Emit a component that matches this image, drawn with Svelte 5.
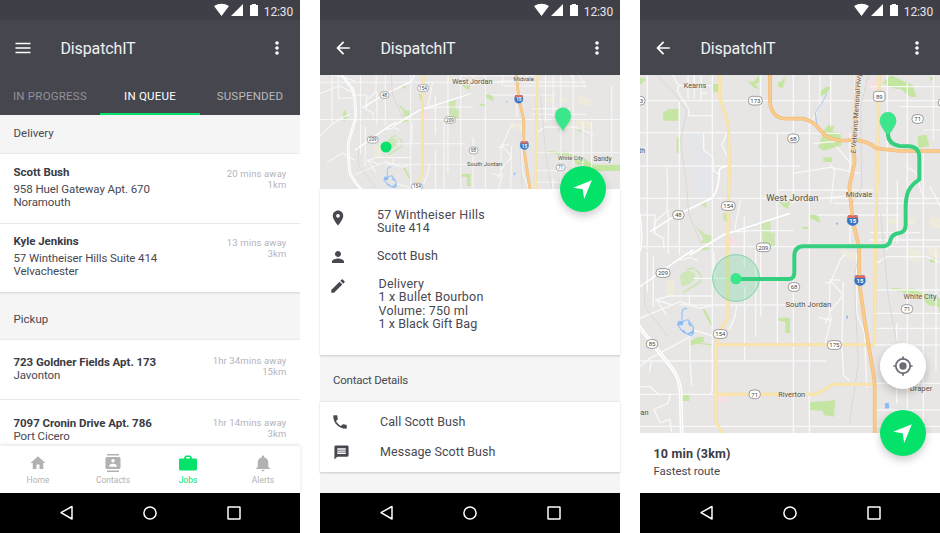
<script>
  const groups = [
    {
      title: 'Delivery',
      jobs: [
        { name: 'Scott Bush', address: ['958 Huel Gateway Apt. 670', 'Noramouth'], eta: '20 mins away', distance: '1km' },
        { name: 'Kyle Jenkins', address: ['57 Wintheiser Hills Suite 414', 'Velvachester'], eta: '13 mins away', distance: '3km' }
      ]
    },
    {
      title: 'Pickup',
      jobs: [
        { name: '723 Goldner Fields Apt. 173', address: ['Javonton'], eta: '1hr 34mins away', distance: '15km' },
        { name: '7097 Cronin Drive Apt. 786', address: ['Port Cicero'], eta: '1hr 14mins away', distance: '3km' }
      ]
    }
  ];

  const tabs = [
    { label: 'Home', d: 'M10 20v-6h4v6h5v-8h3L12 3 2 12h3v8z' },
    { label: 'Contacts', d: 'M20 0H4v2h16V0zM4 24h16v-2H4v2zM20 4H4c-1.1 0-2 .9-2 2v12c0 1.100.9 2 2 2h16c1.100 0 2-.9 2-2V6c0-1.100-.9-2-2-2zm-8 2.750c1.240 0 2.250 1.010 2.250 2.250s-1.010 2.250-2.250 2.250S9.750 10.240 9.750 9 10.760 6.750 12 6.750zM17 17H7v-1.500c0-1.670 3.330-2.500 5-2.500s5 .83 5 2.500V17z' },
    { label: 'Jobs', active: true, d: 'M22 6h-5V4l-2-2H9L7 4v2H2C.9 6 0 6.900 0 8v12c0 1.100.9 2 2 2h20c1.100 0 2-.9 2-2V8c0-1.100-.9-2-2-2zM9.500 4h5v2h-5z' },
    { label: 'Alerts', d: 'M12 23c1.100 0 2-.9 2-2h-4c0 1.100.9 2 2 2zm7-6v-6c0-3.350-2.360-6.150-5.500-6.830V3.500c0-.83-.67-1.500-1.500-1.500s-1.500.67-1.500 1.500v.67C7.360 4.850 5 7.650 5 11v6l-2 2v1h18v-1l-2-2z' }
  ];

  const places = [
    [165, 53, 'Kearns', 22],
    [457, 394, 'West Jordan', 28],
    [657, 382, 'Midvale', 23],
    [505, 711, 'South Jordan', 23],
    [840, 687, 'White City', 22],
    [965, 693, 'Sandy', 26],
    [455, 980, 'Riverton', 22],
    [843, 964, 'Draper', 23],
    [-20, 1034, 'Herriman', 22],
    [-12, 248, 'South', 21]
  ];

  const routes = [
    [346, 92, '173'], [-6, 92, '173'], [265, 408, '154'], [115, 435, '48'], [370, 532, '209'],
    [69, 609, '209'], [462, 651, '68'], [241, 792, '154'], [36, 822, '85'], [344, 973, '71'],
    [583, 825, '175'], [801, 717, '71'], [833, 147, '71'], [460, 205, '68']
  ];

  const wide = { left: -130, right: 1030, top: 357, bottom: 801 };
  const full = { left: -30, right: 900, top: 15, bottom: 1089 };
  const inside = (view) => ([x, y]) => x > view.left && x < view.right && y > view.top && y < view.bottom;
</script>

{#snippet statusBar()}
  <div class="status">
    <svg width="44" height="14" viewBox="0 0 44 14">
      <path d="M0 3Q7.500-1.400 15 3L7.500 13z M17 13L29 1v12z M36 2h2V1h4v1h2v11h-8z" fill="#fff" />
    </svg>
    <span>12:30</span>
  </div>
{/snippet}

{#snippet toolbar(back)}
  <div class="toolbar">
    {#if back}
      <svg class="lead" width="20" height="20" viewBox="0 0 24 24"><path d="M20 11H7.830l5.590-5.590L12 4l-8 8 8 8 1.410-1.410L7.830 13H20z" fill="#fff" /></svg>
    {:else}
      <svg class="lead" width="20" height="20" viewBox="0 0 20 20"><path d="M2.500 5.500h15M2.500 10h15M2.500 14.500h15" stroke="#fff" stroke-width="1.600" /></svg>
    {/if}
    <h1>DispatchIT</h1>
    <svg width="6" height="16" viewBox="0 0 6 16" fill="#fff"><circle cx="3" cy="3" r="1.800" /><circle cx="3" cy="8" r="1.800" /><circle cx="3" cy="13" r="1.800" /></svg>
  </div>
{/snippet}

{#snippet systemNav()}
  <div class="sysnav">
    <svg width="300" height="40" viewBox="0 0 300 40" fill="none" stroke="#fff" stroke-width="1.500">
      <path d="M61 19.700L72 13.500V26z" stroke-linejoin="round" />
      <circle cx="150" cy="20" r="6.100" />
      <rect x="228" y="14" width="12" height="12" rx=".6" />
    </svg>
  </div>
{/snippet}

{#snippet navigateIcon()}
  <svg class="arrow" width="25" height="25" viewBox="0 0 24 24"><path d="M21 3L3 10.200l9.200 1.600L13.600 21z" fill="#fff" /></svg>
{/snippet}

{#snippet shield(x, y)}
  <g transform="translate({x} {y})">
    <path d="M-14-15Q-7-18 0-14Q7-18 14-15Q22 4 13 12Q8 16 0 18Q-8 16-13 12Q-22 4-14-15z" fill="#3973bd" stroke="#e8eef7" stroke-width="1.500" />
    <path d="M-14-15Q-7-18 0-14Q7-18 14-15L16-7H-16z" fill="#db6b5c" />
    <text y="9" font-size="18" font-weight="700" fill="#fff" text-anchor="middle">15</text>
  </g>
{/snippet}

{#snippet cityMap(view)}
  <rect x="-140" y="0" width="1200" height="1100" fill="#e8e6e5" />
  <g fill="#c5e5a2">
    <path d="M216 42h22v25h-22zM69 130l15-12 32-2v36H69zM110 205l8-6v50h-8zM322 32l18 4 16-18 2 18-12 8 14 16-20-8zM414 38l12-4 8-14v14l-6 20-14-4zM0 24l18 2-14 16H0z" />
    <path d="M535 232l16-50 16-20 16 8-6 14 24 6 4 36-54 16zM550 262h26v14h-26zM834 198l26-4 8 34-34 6zM728 38l25-22 65 30 12 36-20-2-26-22-30-4zM870 18l14 8-12 8z" />
    <path d="M511 434l24 2 6 24-18-10-12-4zM486 470h20v6h-20zM415 394l20 6 14-8-4 24-14-6zM540 65l20-16 12 4-14 18-18 8z" />
    <path d="M362 462l30-10v36h12v40l-34 2-4-36zM180 400l18-6 2 18-16-4zM248 430h16v28l-14-8zM168 470l16 12 10 10 20 4v22h-34l10-12zM184 532l28-6-4 12-24 4z" opacity=".8" />
    <path d="M186 717l10 2 20 40-3 8zM415 743h35v46h-14v-34l-21-3zM148 815l28-15 16 2v14l-18 2 46 5v4l-48-6-22 6zM126 975h22v18h-22zM510 996l62-4 14-4-4 52-30-4-4-14-40-2z" />
    <path d="M754 653l42 4 24-2 20 12 48 10 40 30h110v24H898v-20l-34-6-20-26-36-4-20-8-34-6zM870 565h18v12h-18zM-40 490l12 30-16 20-4-30z" />
    <path d="M120 622q5-20 25-20 30 6 18 26-18 22-38 20z" opacity=".7" />
  </g>
  <path d="M165 600q24 10 16 36-20 12-40 24l-12 8M140 598l22-4" fill="none" stroke="#cce6b5" stroke-width="6" />
  <path d="M678 45l24-26 12 34-10 14zM268 505l20-5 4 26-22 5zM232 978h34v18h-34z" fill="#f4e1e4" />
  <g fill="#eeebdc">
    <path d="M76 632h28v44H76zM740 445h38v16h-38zM795 443h32v18h-32zM800 535l46 5-4 36-42-8zM602 540l60 12-8 20-44-10zM862 530l60 10v30l-60-14zM870 440l50 10v28l-50-8z" />
  </g>
  <path d="M147 190h44v58l26 12-4 110-50 30z" fill="#e4e6e9" />

  <g fill="none" stroke="#f8f8f8" stroke-width="4">
    <path d="M22 15V540M118 90V555M217 15V386M217 386V960L212 972M362 15V740M412 190V822M313 440V590M314 650V870M460 600V1090M508 15V1090M460 15V400M347 540V800" />
    <path d="M-140 92H900M-140 188H300L600 190M-140 288H480M-140 385H900M-140 530H1060M118 705H520M-140 873H560M-140 973H220M-140 1069H1060M313 482H460M412 360H700M265 485H320M160 625H430" />
    <path d="M802 40V1090M850 250V1090M888 540V900M772 330V520M770 760V1000M922 540V1000M1000 400V700M572 15V170M742 15V540M630 190V520" />
    <path d="M580 400H900M530 435H780M520 220L640 210M710 580L740 560H860L930 590M706 660H1060M700 730H900M700 775H900M700 825H900M700 940H900M700 1020H900M460 310L570 292 660 310M450 394L620 378M690 488H840M690 510H900" />
    <path d="M98 15l18 32H214M116 47l-4 16 34 54v20M144 15v70M163 15v70M183 15v75M202 70l-15 0M146 137h70M191 190v50l28 22 2 42 20 10M260 190l-14 35 16 35M81 290l2 60-2 75-38 30v35l28 15v28M-140 340l140 40M0 435h45v60" />
    <path d="M0 745L96 705l24-10 60 20 40-10M96 705L50 690l30 45M46 690l40-12h130M0 890l30-25 120-65 10-20 60 18M22 545v120M148 680v28M150 805v65l5 80M34 873l-6 35M0 950l30 0 30 26M90 975l-6 25-42 18 18 40 30-10 6 45" />
    <path d="M290 705l-4 30-18 45M302 388l-18 90M118 570l34-8 20 10M222 545v80M570 750l-34-8M570 642L600 570l16-18M555 820l20-80M555 640l14-4v100l-14 24M610 635l-4 190 4 90 18 18M570 725l40-50-40-45h30M650 550v180l24 60 6 165M-140 545V660M-140 430L-60 400 0 430M-110 700L-50 660 0 690" />
    <path d="M840 300q-10 60 20 90M850 180h60M840 330l-14-24-28-16M870 350l32 60M572 400l12-100-12-16M880 210V15M645 15V170M540 15v90l-30 60M690 50h210M780 110h120M590 230l50 60" stroke-width="3.500" />
    <path d="M-140 600Q-80 530-20 510M-90 357v190M-65 357v90h60M40 560v150M85 420v130" stroke-width="4" />
  </g>
  <g fill="none" stroke="#fff" stroke-width="5">
    <path d="M30 485L110 435 215 385Q238 360 238 300 242 290 265 288M150 555L250 495 450 430M0 650L120 565 160 540" />
    <path d="M-52 357L-8 415Q6 470 0 532L-26 620Q-28 660-20 740L0 773 100 900Q120 930 122 970L125 1090" stroke-width="11" />
  </g>
  <path d="M-52 357L-8 415Q6 470 0 532L-26 620Q-28 660-20 740L0 773 100 900Q120 930 122 970L125 1090" fill="none" stroke="#e4e2e0" stroke-width="2" />
  <g fill="none" stroke="#d7d5d2" stroke-width="2.500">
    <path d="M50 15L95 60 140 120 122 215 140 350 146 430 185 525" />
    <path d="M685 15L662 110 665 350 630 410 660 540 642 620 655 880 628 1060M722 430Q735 580 745 680L770 820M14 640v70l70 90" />
  </g>
  <path d="M560 72l-10 20-24 36 6 50 20 12" fill="none" stroke="#a8c8f0" stroke-width="3" />
  <path d="M126 750v-25q8-14 15-8" fill="none" stroke="#9cc6f8" stroke-width="4" />
  <path d="M128 753l-14 12 12 18 26 14 8-6v-20l-16-22z" fill="none" stroke="#9cc6f8" stroke-width="4" />
  <path d="M116 752l14 2-2 12-18 0zM122 776l14 8-2 8zM136 792h24v-16l-8 10zM144 752l14 20-12-6z" fill="#8abdf8" />
  <path d="M734 1000l12-2 2 16-12 2zM619 738l5-2v10h-5zM586 462l8-6v8z" fill="#8abdf8" />

  <g fill="none" stroke-linejoin="round">
    <g stroke="#f1dba0" stroke-width="9">
      <path d="M240 15L238 80 265 160 268 300 265 410 263 560 264 740 232 800 228 830V1055L250 1095" />
      <path d="M718 15L714 230 706 540 704 822M228 824H704M228 973H530L580 943H708" />
    </g>
    <g stroke="#fbe6ac" stroke-width="6.500">
      <path d="M240 15L238 80 265 160 268 300 265 410 263 560 264 740 232 800 228 830V1055L250 1095" />
      <path d="M718 15L714 230 706 540 704 822M228 824H704M228 973H530L580 943H708" />
    </g>
    <g stroke="#ecb877" stroke-width="11">
      <path d="M390 15V92Q392 150 450 146H490Q520 152 545 185T630 210Q675 208 710 235L780 243H1060" />
      <path d="M653 15L648 110 640 230Q645 265 643 280L628 350 638 450 657 530 658 640 675 760 700 910 704 940V1090" />
    </g>
    <g stroke="#fbcb8c" stroke-width="7.500">
      <path d="M390 15V92Q392 150 450 146H490Q520 152 545 185T630 210Q675 208 710 235L780 243H1060" />
      <path d="M653 15L648 110 640 230Q645 265 643 280L628 350 638 450 657 530 658 640 675 760 700 910 704 940V1090" />
    </g>
  </g>

  <g font-family="Roboto, sans-serif">
    {#each routes.filter(inside(view)) as [x, y, label]}
      <rect x={x - (label.length === 3 ? 21 : 17)} y={y - 13} width={label.length === 3 ? 42 : 34} height="26" rx="12" fill="#fff" stroke="#7a7a7a" stroke-width="2.200" />
      <text {x} y={y + 6.5} font-size="18" fill="#444" text-anchor="middle">{label}</text>
    {/each}
    {#if view === full}
      <rect x="701" y="64" width="34" height="30" rx="7" fill="#fff" stroke="#7a7a7a" stroke-width="2.200" />
      <text x="718" y="86" font-size="18" fill="#444" text-anchor="middle">89</text>
      <rect x="895" y="85" width="42" height="26" rx="12" fill="#fff" stroke="#7a7a7a" stroke-width="2.200" />
      <text transform="translate(647 250) rotate(-86)" font-size="21" fill="#5b4c3c" stroke="#f6efe4" stroke-width="3" paint-order="stroke">E Veterans Memorial Hwy</text>
    {/if}
    {@render shield(638, 451)}
    {@render shield(660, 631)}
    {#each places.filter(inside(view)) as [x, y, label, size]}
      <text {x} {y} font-size={size} fill="#5a5040" stroke="#efedea" stroke-width="3" paint-order="stroke" text-anchor="middle">{label}</text>
    {/each}
  </g>
{/snippet}

<main>
  <section class="phone">
    {@render statusBar()}
    {@render toolbar(false)}
    <nav class="tabs">
      <span class="dim">IN PROGRESS</span>
      <span class="on">IN QUEUE</span>
      <span>SUSPENDED</span>
    </nav>
    <div class="list">
      {#each groups as group}
        <h2>{group.title}</h2>
        <div class="card" class:compact={group.title === 'Pickup'}>
          {#each group.jobs as job}
            <article>
              <div>
                <strong>{job.name}</strong>
                {#each job.address as line}<p>{line}</p>{/each}
              </div>
              <div class="eta">{job.eta}<br />{job.distance}</div>
            </article>
          {/each}
        </div>
      {/each}
    </div>
    <nav class="bottom">
      {#each tabs as tab}
        <div class:active={tab.active}>
          <svg width="18" height="18" viewBox="0 0 24 24"><path d={tab.d} fill="currentColor" fill-rule="evenodd" /></svg>
          <span>{tab.label}</span>
        </div>
      {/each}
    </nav>
    {@render systemNav()}
  </section>

  <section class="phone">
    {@render statusBar()}
    {@render toolbar(true)}
    <div class="map short">
      <svg width="300" height="114" viewBox="0 0 300 114">
        <svg width="300" height="114" viewBox="-136.400 357 1168.800 444" preserveAspectRatio="none">{@render cityMap(wide)}</svg>
        <circle cx="66" cy="72" r="5.500" fill="#05e269" />
        <path d="M243 56C238 48.500 235 45 235 40.500a8 8 0 0 1 16 0C251 45 248 48.500 243 56z" fill="#3ce68a" class="pin" />
      </svg>
      <button class="fab" aria-label="Navigate">{@render navigateIcon()}</button>
    </div>
    <div class="details">
      <div class="row place">
        <svg width="18" height="18" viewBox="0 0 24 24"><path d="M12 2C8.130 2 5 5.130 5 9c0 5.250 7 13 7 13s7-7.750 7-13c0-3.870-3.130-7-7-7zm0 9.500a2.500 2.500 0 1 1 0-5 2.500 2.500 0 0 1 0 5z" /></svg>
        <p>57 Wintheiser Hills<br /><span class="tight">Suite 414</span></p>
      </div>
      <div class="row person">
        <svg width="18" height="18" viewBox="0 0 24 24"><path d="M12 12c2.210 0 4-1.790 4-4s-1.790-4-4-4-4 1.790-4 4 1.790 4 4 4zm0 2c-2.670 0-8 1.340-8 4v2h16v-2c0-2.660-5.330-4-8-4z" /></svg>
        <p class="tight">Scott Bush</p>
      </div>
      <div class="row order">
        <svg width="18" height="18" viewBox="0 0 24 24"><path d="M3 17.250V21h3.750L17.810 9.940l-3.750-3.750L3 17.250zM20.710 7.040a1 1 0 0 0 0-1.410l-2.340-2.340a1 1 0 0 0-1.410 0l-1.830 1.830 3.750 3.750 1.830-1.830z" /></svg>
        <p>Delivery<br />1 x Bullet Bourbon<br />Volume: 750 ml<br /><span class="tight">1 x Black Gift Bag</span></p>
      </div>
    </div>
    <h2 class="contact">Contact Details</h2>
    <div class="actions">
      <div>
        <svg width="18" height="18" viewBox="0 0 24 24"><path d="M6.620 10.790c1.440 2.830 3.760 5.140 6.590 6.590l2.200-2.200c.27-.27.67-.36 1.020-.24 1.120.37 2.330.57 3.570.57.55 0 1 .45 1 1V20c0 .55-.45 1-1 1-9.390 0-17-7.610-17-17 0-.55.45-1 1-1h3.500c.55 0 1 .45 1 1 0 1.250.2 2.450.57 3.570.11.35.03.74-.25 1.020l-2.200 2.200z" /></svg>
        <span>Call Scott Bush</span>
      </div>
      <div>
        <svg class="message" width="17" height="17" viewBox="0 0 24 24"><path d="M20 2H4c-1.100 0-1.990.9-1.990 2L2 22l4-4h14c1.100 0 2-.9 2-2V4c0-1.100-.9-2-2-2zm-2 12H6v-2h12v2zm0-3H6V9h12v2zm0-3H6V6h12v2z" /></svg>
        <span>Message Scott Bush</span>
      </div>
    </div>
    <div class="filler"></div>
    {@render systemNav()}
  </section>

  <section class="phone">
    {@render statusBar()}
    {@render toolbar(true)}
    <div class="map tall">
      <svg width="300" height="358" viewBox="0 15 900 1074">
        {@render cityMap(full)}
        <circle cx="288" cy="624" r="70" fill="#3ad584" fill-opacity=".22" stroke="#7fd3a8" stroke-width="3" />
        <path d="M288 627H450Q463 625 463 607V560Q463 529 490 529H728Q748 529 752 508 758 492 775 490 797 487 797 465V408Q798 370 812 352 820 340 838 328V262Q838 232 808 229L778 228Q746 222 744 195V180" fill="none" stroke="#35d07f" stroke-width="12" stroke-linejoin="round" />
        <circle cx="288" cy="626" r="17" fill="#3ce68a" />
        <path d="M744 198C732 180 719 166 719 151a25 25 0 0 1 50 0C769 166 756 180 744 198z" fill="#3ce68a" class="pin" />
      </svg>
      <button class="fab locate" aria-label="My location">
        <svg width="22" height="22" viewBox="0 0 24 24" fill="none" stroke="#6b6b75" stroke-width="1.900"><circle cx="12" cy="12" r="7.800" /><circle cx="12" cy="12" r="4" fill="#6b6b75" stroke="none" /><path d="M12 1.500v3M12 19.500v3M1.500 12h3M19.500 12h3" /></svg>
      </button>
      <button class="fab" aria-label="Start route">{@render navigateIcon()}</button>
    </div>
    <div class="sheet">
      <strong>10 min (3km)</strong>
      <p>Fastest route</p>
    </div>
    {@render systemNav()}
  </section>
</main>

<style>
  :global(body) { background: #fff; }
  main {
    display: flex;
    gap: 20px;
    width: 940px;
    height: 533px;
    overflow: hidden;
    font-family: Roboto, sans-serif;
    color: #484851;
  }
  .phone {
    width: 300px;
    flex: none;
    display: flex;
    flex-direction: column;
    height: 533px;
    background: #f5f5f5;
  }
  svg { display: block; flex: none; }
  p { margin: 0; }

  .status {
    height: 20px;
    flex: none;
    display: flex;
    justify-content: flex-end;
    align-items: center;
    gap: 6px;
    padding-right: 7px;
    box-sizing: border-box;
    background: #3f3f48;
    color: #e6e6e8;
    font-size: 12px;
    line-height: 20px;
    letter-spacing: -0.15px;
  }
  .status span { padding-top: 3px; }
  .toolbar {
    height: 55px;
    flex: none;
    display: flex;
    align-items: center;
    padding: 0 20.500px 0 13px;
    background: #46464f;
    color: #fff;
  }
  h1 {
    flex: 1;
    margin: 1px 0 0 27.500px;
    font-size: 16px;
    font-weight: 400;
    letter-spacing: -0.14px;
    color: #f1f1f2;
  }
  .tabs {
    height: 40px;
    flex: none;
    display: flex;
    background: #46464f;
    color: #b8b8bc;
    font-size: 11.500px;
    letter-spacing: 0.22px;
    text-align: center;
  }
  .tabs span { flex: 1; box-sizing: border-box; height: 40px; line-height: 43px; }
  .tabs .dim { color: #919197; }
  .tabs .on { color: #fff; border-bottom: 2px solid #05e269; }

  .list { flex: 1; min-height: 0; overflow: hidden; }
  h2 {
    margin: 0;
    height: 38px;
    padding-left: 13.500px;
    font-size: 11.500px;
    font-weight: 400;
    line-height: 37px;
    background: #f5f5f5;
  }
  .card + h2 { height: 47px; line-height: 55px; }
  .card {
    position: relative;
    background: #fff;
    border-top: 1px solid #ebebeb;
    box-shadow: 0 1px 2px rgba(0, 0, 0, 0.15);
  }
  article {
    display: flex;
    justify-content: space-between;
    box-sizing: border-box;
    height: 69px;
    padding: 12px 13.500px 0;
    font-size: 11.500px;
    line-height: 13px;
    letter-spacing: -0.09px;
  }
  article + article { border-top: 1px solid #e9e9e9; padding-top: 11px; }
  article strong { display: block; margin-bottom: 4px; color: #3b3b45; letter-spacing: -0.05px; }
  .eta {
    padding-top: 1.500px;
    font-size: 9.500px;
    line-height: 11px;
    letter-spacing: 0.13px;
    text-align: right;
    color: #b3b3be;
  }
  .compact article { height: 59px; padding-top: 15.500px; }
  .compact article + article { padding-top: 17px; }
  .compact strong { margin-bottom: 0; }
  .compact .eta { padding-top: 0; margin-top: -0.500px; }

  .bottom {
    position: relative;
    height: 47px;
    flex: none;
    display: flex;
    background: #fff;
    box-shadow: 0 -1px 4px rgba(0, 0, 0, 0.12);
    color: #b2b2b2;
    font-size: 8.500px;
  }
  .bottom div {
    flex: 1;
    display: flex;
    flex-direction: column;
    align-items: center;
    gap: 3px;
    padding: 8px 0 0 1px;
    line-height: 10px;
  }
  .bottom .active { color: #05e269; }
  .sysnav { height: 40px; flex: none; background: #000; position: relative; }

  .map { position: relative; flex: none; background: #e8e6e5; }
  .short { height: 114px; }
  .tall { height: 358px; }
  .pin { filter: drop-shadow(0 2px 2px rgba(0, 0, 0, 0.15)); }
  .fab {
    position: absolute;
    right: 14px;
    bottom: -23px;
    width: 46px;
    height: 46px;
    padding: 0;
    border: 0;
    border-radius: 50%;
    display: grid;
    place-items: center;
    background: #05e269;
    box-shadow: 0 4px 8px rgba(0, 0, 0, 0.2);
  }
  .arrow { margin: 1px 1.500px 0 0; }
  .locate { bottom: 44px; background: #fff; }

  .details {
    height: 166px;
    flex: none;
    background: #fff;
    box-shadow: 0 1px 2px rgba(0, 0, 0, 0.18);
    box-sizing: border-box;
    padding: 19px 9px 0;
    display: flex;
    flex-direction: column;
    font-size: 12.500px;
    line-height: 13.300px;
    letter-spacing: 0.22px;
  }
  .row { display: flex; gap: 30px; }
  .row svg, .actions svg { fill: #484851; }
  .place svg { margin-top: 1px; }
  .person { margin-top: 14.500px; }
  .person svg { margin-top: -1px; }
  .order { margin-top: 11px; gap: 31.500px; }
  .tight { letter-spacing: 0.06px; }
  .contact { height: 46px; flex: none; line-height: 51px; letter-spacing: -0.22px; padding-left: 13px; }
  .details + .contact { background: none; }
  .actions {
    height: 71px;
    flex: none;
    box-sizing: border-box;
    padding: 5px 11px 0;
    background: #fff;
    border-top: 1px solid #ebebeb;
    box-shadow: 0 1px 2px rgba(0, 0, 0, 0.18);
    font-size: 12.500px;
    letter-spacing: 0.06px;
  }
  .actions div { height: 29.500px; display: flex; align-items: center; gap: 31px; }
  .actions .message { margin: 2px -1px 0 2px; }
  .filler { flex: 1; }
  .sheet {
    flex: 1;
    padding: 13px 13.500px 0;
    background: #fff;
    font-size: 11.500px;
    line-height: 16px;
    letter-spacing: -0.06px;
  }
  .sheet strong { display: block; font-size: 12.500px; letter-spacing: 0.16px; color: #3b3b45; }
  .sheet p { padding-top: 1px; }
</style>
